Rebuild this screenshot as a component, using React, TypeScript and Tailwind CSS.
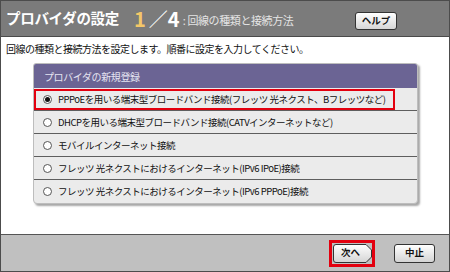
import React from 'react';

const font = { fontFamily: '"Noto Sans CJK JP", "Noto Sans", sans-serif' };

const options = [
  'PPPoEを用いる端末型ブロードバンド接続(フレッツ 光ネクスト、Bフレッツなど)',
  'DHCPを用いる端末型ブロードバンド接続(CATVインターネットなど)',
  'モバイルインターネット接続',
  'フレッツ 光ネクストにおけるインターネット(IPv6 IPoE)接続',
  'フレッツ 光ネクストにおけるインターネット(IPv6 PPPoE)接続',
];

function Radio({ checked }: { checked?: boolean }) {
  return (
    <span className="flex items-center justify-center w-[9px] h-[9px] rounded-full border border-[#555] bg-white shrink-0">
      {checked && <span className="w-[5px] h-[5px] rounded-full bg-[#111]" />}
    </span>
  );
}

export default function App() {
  return (
    <div
      className="w-[450px] h-[272px] border border-[#4c4c4c] flex flex-col bg-white text-[#111]"
      style={font}
    >
      {/* Header */}
      <div className="h-[36px] bg-[#7b7b7b] border-b border-[#4a4a4a] flex items-center pl-[5px] pr-[52px]">
        <span className="text-[14.5px] font-bold text-white tracking-[-0.3px] leading-none">
          プロバイダの設定
        </span>
        <span className="ml-[15px] text-[20px] font-bold text-[#f3c768] leading-none">1</span>
        <span className="ml-[3px] text-[19px] text-white leading-none">／</span>
        <span className="text-[20px] font-bold text-white leading-none">4</span>
        <span className="ml-[3px] mt-[4px] text-[11px] text-[#e4e4e4] tracking-[-0.4px] leading-none">
          : 回線の種類と接続方法
        </span>
        <button className="ml-auto mt-[4px] w-[42px] h-[18px] rounded-[3px] border border-[#333] bg-linear-to-b from-white to-[#d6d6d6] text-[9.5px] font-bold leading-none flex items-center justify-center">
          ヘルプ
        </button>
      </div>

      {/* Body */}
      <div className="flex-1 pt-[5px]">
        <p className="pl-[5px] text-[10px] leading-[14px] tracking-[-0.5px]">
          回線の種類と接続方法を設定します。順番に設定を入力してください。
        </p>
        <div className="ml-[32px] mt-[7px] w-[385px] rounded-t-[3px] rounded-b-[4px] bg-[#ebebeb] shadow-[2px_2px_2px_rgba(0,0,0,0.35)] border border-[#bdbdbd] overflow-hidden">
          <div className="h-[24px] bg-[#6b6494] flex items-center pl-[10px] text-[10px] text-[#e6e4f2] tracking-[-0.4px]">
            プロバイダの新規登録
          </div>
          {options.map((label, i) => (
            <div
              key={i}
              className={`h-[23px] flex items-center ${i < options.length - 1 ? 'border-b border-[#5e5e5e]' : ''}`}
            >
              {i === 0 ? (
                <div className="w-[361px] h-[21px] border-2 border-[#e3000f] flex items-center gap-[6px] pl-[7px] text-[9.5px] tracking-[-0.5px] whitespace-nowrap">
                  <Radio checked />
                  {label}
                </div>
              ) : (
                <div className="flex items-center gap-[6px] pl-[9px] text-[9.5px] tracking-[-0.5px] whitespace-nowrap">
                  <Radio />
                  {label}
                </div>
              )}
            </div>
          ))}
        </div>
      </div>

      {/* Footer */}
      <div className="h-[37px] bg-[#c0c0c0] border-t border-[#555] flex items-center justify-end pr-[14px] gap-[19px]">
        <div className="w-[46px] h-[27px] border-[3px] border-[#e3000f] flex items-center justify-center">
          <div className="relative w-[39px] h-[19px] flex items-center justify-center">
            <svg className="absolute inset-0" width="39" height="19" viewBox="0 0 39 19">
              <defs>
                <linearGradient id="nx" x1="0" y1="0" x2="0" y2="1">
                  <stop offset="0" stopColor="#ffffff" />
                  <stop offset="1" stopColor="#d4d4d4" />
                </linearGradient>
              </defs>
              <path
                d="M3 0.5 H33 L38.5 6 V13 L33 18.5 H3 Q0.5 18.5 0.5 16 V3 Q0.5 0.5 3 0.5 Z"
                fill="url(#nx)"
                stroke="#333"
              />
            </svg>
            <span className="relative text-[9.5px] font-bold leading-none pr-[3px]">次へ</span>
          </div>
        </div>
        <button className="w-[41px] h-[19px] rounded-[3px] border border-[#333] bg-linear-to-b from-white to-[#d4d4d4] text-[9.5px] font-bold leading-none flex items-center justify-center">
          中止
        </button>
      </div>
    </div>
  );
}
